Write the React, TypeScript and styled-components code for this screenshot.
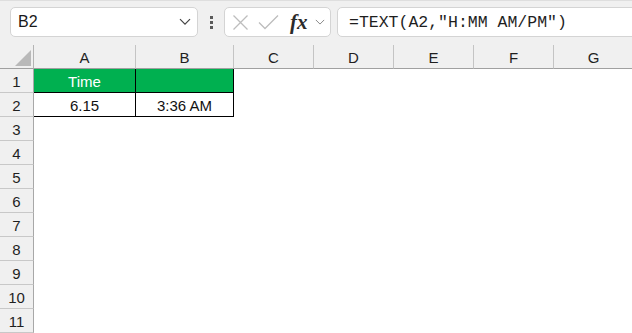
import { Fragment } from "react";
import styled, { createGlobalStyle } from "styled-components";

const GlobalStyle = createGlobalStyle`
   * {
      box-sizing: border-box;
   }
   body {
      margin: 0;
      background: #ffffff;
      font-family: "Liberation Sans", Arial, sans-serif;
      color: #1f1f1f;
   }
`;

const Page = styled.div`
   width: 632px;
   height: 333px;
   overflow: hidden;
   background: #ffffff;
`;

const FormulaBar = styled.div`
   height: 45px;
   background: #f0f0f0;
   border-top: 1px solid #dedede;
   display: flex;
   align-items: flex-start;
   padding: 6px 0 0 10px;
`;

const Box = styled.div`
   height: 30px;
   background: #ffffff;
   border: 1px solid #d4d4d4;
   border-radius: 5px;
   display: flex;
   align-items: center;
`;

const NameBox = styled(Box)`
   width: 188px;
   padding: 0 6px 0 7px;
   justify-content: space-between;
   font-size: 16px;
   color: #1a1a1a;
`;

const Dots = styled.div`
   width: 26px;
   height: 30px;
   display: flex;
   flex-direction: column;
   align-items: center;
   justify-content: center;
   gap: 2px;
   span {
      width: 3px;
      height: 3px;
      background: #5a5a5a;
   }
`;

const IconBox = styled(Box)`
   width: 107px;
   padding: 0 3px 0 7px;
   gap: 9px;
`;

const Fx = styled.span`
   font-family: "Liberation Serif", "Times New Roman", serif;
   font-style: italic;
   font-weight: 700;
   font-size: 21px;
   color: #2b2b2b;
   margin-left: 2px;
   margin-right: -2px;
   line-height: 1;
`;

const FormulaInput = styled(Box)`
   flex: 1;
   margin-left: 6px;
   margin-right: -10px;
   padding-left: 11px;
   font-family: "Liberation Mono", "DejaVu Sans Mono", monospace;
   font-size: 16.5px;
   color: #1e1e1e;
`;

const Sheet = styled.div`
   display: grid;
   grid-template-columns: 34px 102px 98px repeat(5, 80px);
   grid-auto-rows: 24px;
`;

const Corner = styled.div`
   position: relative;
   background: #f0f0f0;
   border-right: 1px solid #b4b4b4;
   border-bottom: 1px solid #a0a0a0;
   &::after {
      content: "";
      position: absolute;
      left: 15px;
      top: 5px;
      width: 16px;
      height: 16px;
      background: #b9b9b9;
      clip-path: polygon(100% 0, 100% 100%, 0 100%);
   }
`;

const ColHead = styled.div`
   background: #f0f0f0;
   border-right: 1px solid #c4c4c4;
   border-bottom: 1px solid #a0a0a0;
   display: flex;
   align-items: center;
   justify-content: center;
   font-size: 15px;
   padding-top: 1px;
`;

const RowHead = styled.div`
   background: #f0f0f0;
   border-right: 1px solid #a8a8a8;
   border-bottom: 1px solid #c8c8c8;
   display: flex;
   align-items: center;
   justify-content: center;
   font-size: 15px;
   padding-top: 1px;
`;

const Cell = styled.div<{ $fill?: string; $boxed?: boolean; $light?: boolean }>`
   background: ${({ $fill }) => $fill || "#ffffff"};
   border-right: 1px solid ${({ $boxed }) => ($boxed ? "#000000" : "transparent")};
   border-bottom: 1px solid ${({ $boxed }) => ($boxed ? "#000000" : "transparent")};
   color: ${({ $light }) => ($light ? "#ffffff" : "#111111")};
   display: flex;
   align-items: center;
   justify-content: center;
   font-size: 15px;
   padding-top: 1px;
`;

const columns = ["A", "B", "C", "D", "E", "F", "G"];

type CellData = { text?: string; fill?: string; light?: boolean; boxed?: boolean };

const data: Record<number, CellData[]> = {
   1: [
      { text: "Time", fill: "#00b050", light: true, boxed: true },
      { fill: "#00b050", boxed: true },
   ],
   2: [
      { text: "6.15", boxed: true },
      { text: "3:36 AM", boxed: true },
   ],
};

function ChevronDown({ size = 12, color = "#444" }: { size?: number; color?: string }) {
   return (
      <svg width={size} height={size * 0.6} viewBox="0 0 12 7" fill="none">
         <path d="M1 1l5 5 5-5" stroke={color} strokeWidth="1.2" />
      </svg>
   );
}

function App() {
   const rows = Array.from({ length: 11 }, (_, i) => i + 1);

   return (
      <Page>
         <GlobalStyle />
         <FormulaBar>
            <NameBox>
               <span>B2</span>
               <ChevronDown size={12} color="#444" />
            </NameBox>
            <Dots>
               <span />
               <span />
               <span />
            </Dots>
            <IconBox>
               <svg width="17" height="17" viewBox="0 0 17 17" fill="none">
                  <path d="M1.5 1.5l14 14M15.5 1.5l-14 14" stroke="#bdbdbd" strokeWidth="1.3" />
               </svg>
               <svg width="21" height="16" viewBox="0 0 21 16" fill="none">
                  <path d="M1 8.5l6 6L20 1.5" stroke="#bdbdbd" strokeWidth="1.3" />
               </svg>
               <Fx>fx</Fx>
               <ChevronDown size={10} color="#8a8a8a" />
            </IconBox>
            <FormulaInput>=TEXT(A2,"H:MM AM/PM")</FormulaInput>
         </FormulaBar>
         <Sheet>
            <Corner />
            {columns.map((c) => (
               <ColHead key={c}>{c}</ColHead>
            ))}
            {rows.map((r) => (
               <Fragment key={r}>
                  <RowHead>{r}</RowHead>
                  {columns.map((c, ci) => {
                     const d = data[r]?.[ci];
                     return (
                        <Cell key={`${c}${r}`} $fill={d?.fill} $light={d?.light} $boxed={d?.boxed}>
                           {d?.text}
                        </Cell>
                     );
                  })}
               </Fragment>
            ))}
         </Sheet>
      </Page>
   );
}

export default App;
